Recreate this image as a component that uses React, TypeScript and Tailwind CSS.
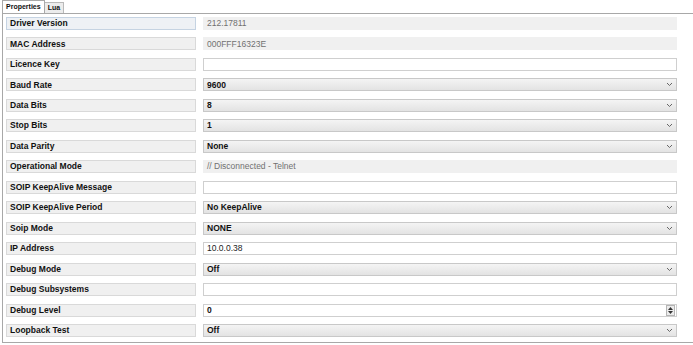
import React from "react";

type Kind = "readonly" | "text" | "select" | "spin";

interface Row {
  label: string;
  value: string;
  kind: Kind;
}

const rows: Row[] = [
  { label: "Driver Version", value: "212.17811", kind: "readonly" },
  { label: "MAC Address", value: "000FFF16323E", kind: "readonly" },
  { label: "Licence Key", value: "", kind: "text" },
  { label: "Baud Rate", value: "9600", kind: "select" },
  { label: "Data Bits", value: "8", kind: "select" },
  { label: "Stop Bits", value: "1", kind: "select" },
  { label: "Data Parity", value: "None", kind: "select" },
  { label: "Operational Mode", value: "// Disconnected - Telnet", kind: "readonly" },
  { label: "SOIP KeepAlive Message", value: "", kind: "text" },
  { label: "SOIP KeepAlive Period", value: "No KeepAlive", kind: "select" },
  { label: "Soip Mode", value: "NONE", kind: "select" },
  { label: "IP Address", value: "10.0.0.38", kind: "text" },
  { label: "Debug Mode", value: "Off", kind: "select" },
  { label: "Debug Subsystems", value: "", kind: "text" },
  { label: "Debug Level", value: "0", kind: "spin" },
  { label: "Loopback Test", value: "Off", kind: "select" },
];

function Chevron() {
  return (
    <svg width="7" height="5" viewBox="0 0 7 5" className="shrink-0">
      <path d="M1 1 L3.5 3.5 L6 1" fill="none" stroke="#666" strokeWidth="1" />
    </svg>
  );
}

function Spinner() {
  return (
    <div className="flex flex-col w-[9px] h-[11px] border border-[#b5b5b5] bg-[#ececec] items-center justify-center gap-[1px]">
      <svg width="5" height="3" viewBox="0 0 5 3">
        <path d="M0 3 L2.5 0 L5 3 Z" fill="#333" />
      </svg>
      <svg width="5" height="3" viewBox="0 0 5 3">
        <path d="M0 0 L2.5 3 L5 0 Z" fill="#333" />
      </svg>
    </div>
  );
}

function Field({ row }: { row: Row }) {
  if (row.kind === "readonly") {
    return (
      <div className="flex-1 h-[13px] bg-[#f0f0f0] flex items-center pl-[4px] text-[#707070] text-[8.5px]">
        {row.value}
      </div>
    );
  }
  if (row.kind === "text") {
    return (
      <div className="flex-1 h-[13px] bg-white border border-[#cfcfcf] flex items-center pl-[3px] text-[#222] text-[8.5px]">
        {row.value}
      </div>
    );
  }
  if (row.kind === "spin") {
    return (
      <div className="flex-1 h-[13px] bg-white border border-[#cfcfcf] flex items-center justify-between pl-[3px] pr-[1px] text-[#111] font-bold text-[8.5px]">
        <span>{row.value}</span>
        <Spinner />
      </div>
    );
  }
  return (
    <div className="flex-1 h-[13px] border border-[#c8c8c8] bg-gradient-to-b from-[#f4f4f4] to-[#e3e3e3] flex items-center justify-between pl-[3px] pr-[3px] text-[#111] font-bold text-[8.5px]">
      <span>{row.value}</span>
      <Chevron />
    </div>
  );
}

export default function App() {
  return (
    <div
      className="w-[693px] h-[345px] bg-white overflow-hidden"
      style={{ fontFamily: '"Liberation Sans", Arial, sans-serif' }}
    >
      {/* Tabs */}
      <div className="h-[13px] flex items-end pl-[2px]">
        <div className="h-[13px] px-[3px] bg-white border border-b-0 border-[#a9a9a9] text-[7px] font-bold text-[#111] flex items-center">
          Properties
        </div>
        <div className="h-[11px] px-[3px] bg-[#ececec] border border-b-0 border-l-0 border-[#b9b9b9] text-[7px] font-bold text-[#111] flex items-center">
          Lua
        </div>
      </div>

      {/* Panel */}
      <div className="ml-[2px] h-[330px] border-t border-l border-b border-[#a8a8a8] pt-[3px] pl-[3px] flex flex-col gap-[7.47px]">
        {rows.map((row, i) => (
          <div key={row.label} className="flex items-center h-[13px]">
            <div
              className={
                i === 0
                  ? "w-[190px] h-[13px] bg-[#eef1f5] border border-[#c5d3e2] flex items-center pl-[3px] text-[8.5px] font-bold text-[#111]"
                  : "w-[190px] h-[13px] bg-[#f0f0f0] border border-[#d9d9d9] flex items-center pl-[3px] text-[8.5px] font-bold text-[#111]"
              }
            >
              {row.label}
            </div>
            <div className="w-[7px]" />
            <div className="w-[474px] flex">
              <Field row={row} />
            </div>
          </div>
        ))}
      </div>
    </div>
  );
}
